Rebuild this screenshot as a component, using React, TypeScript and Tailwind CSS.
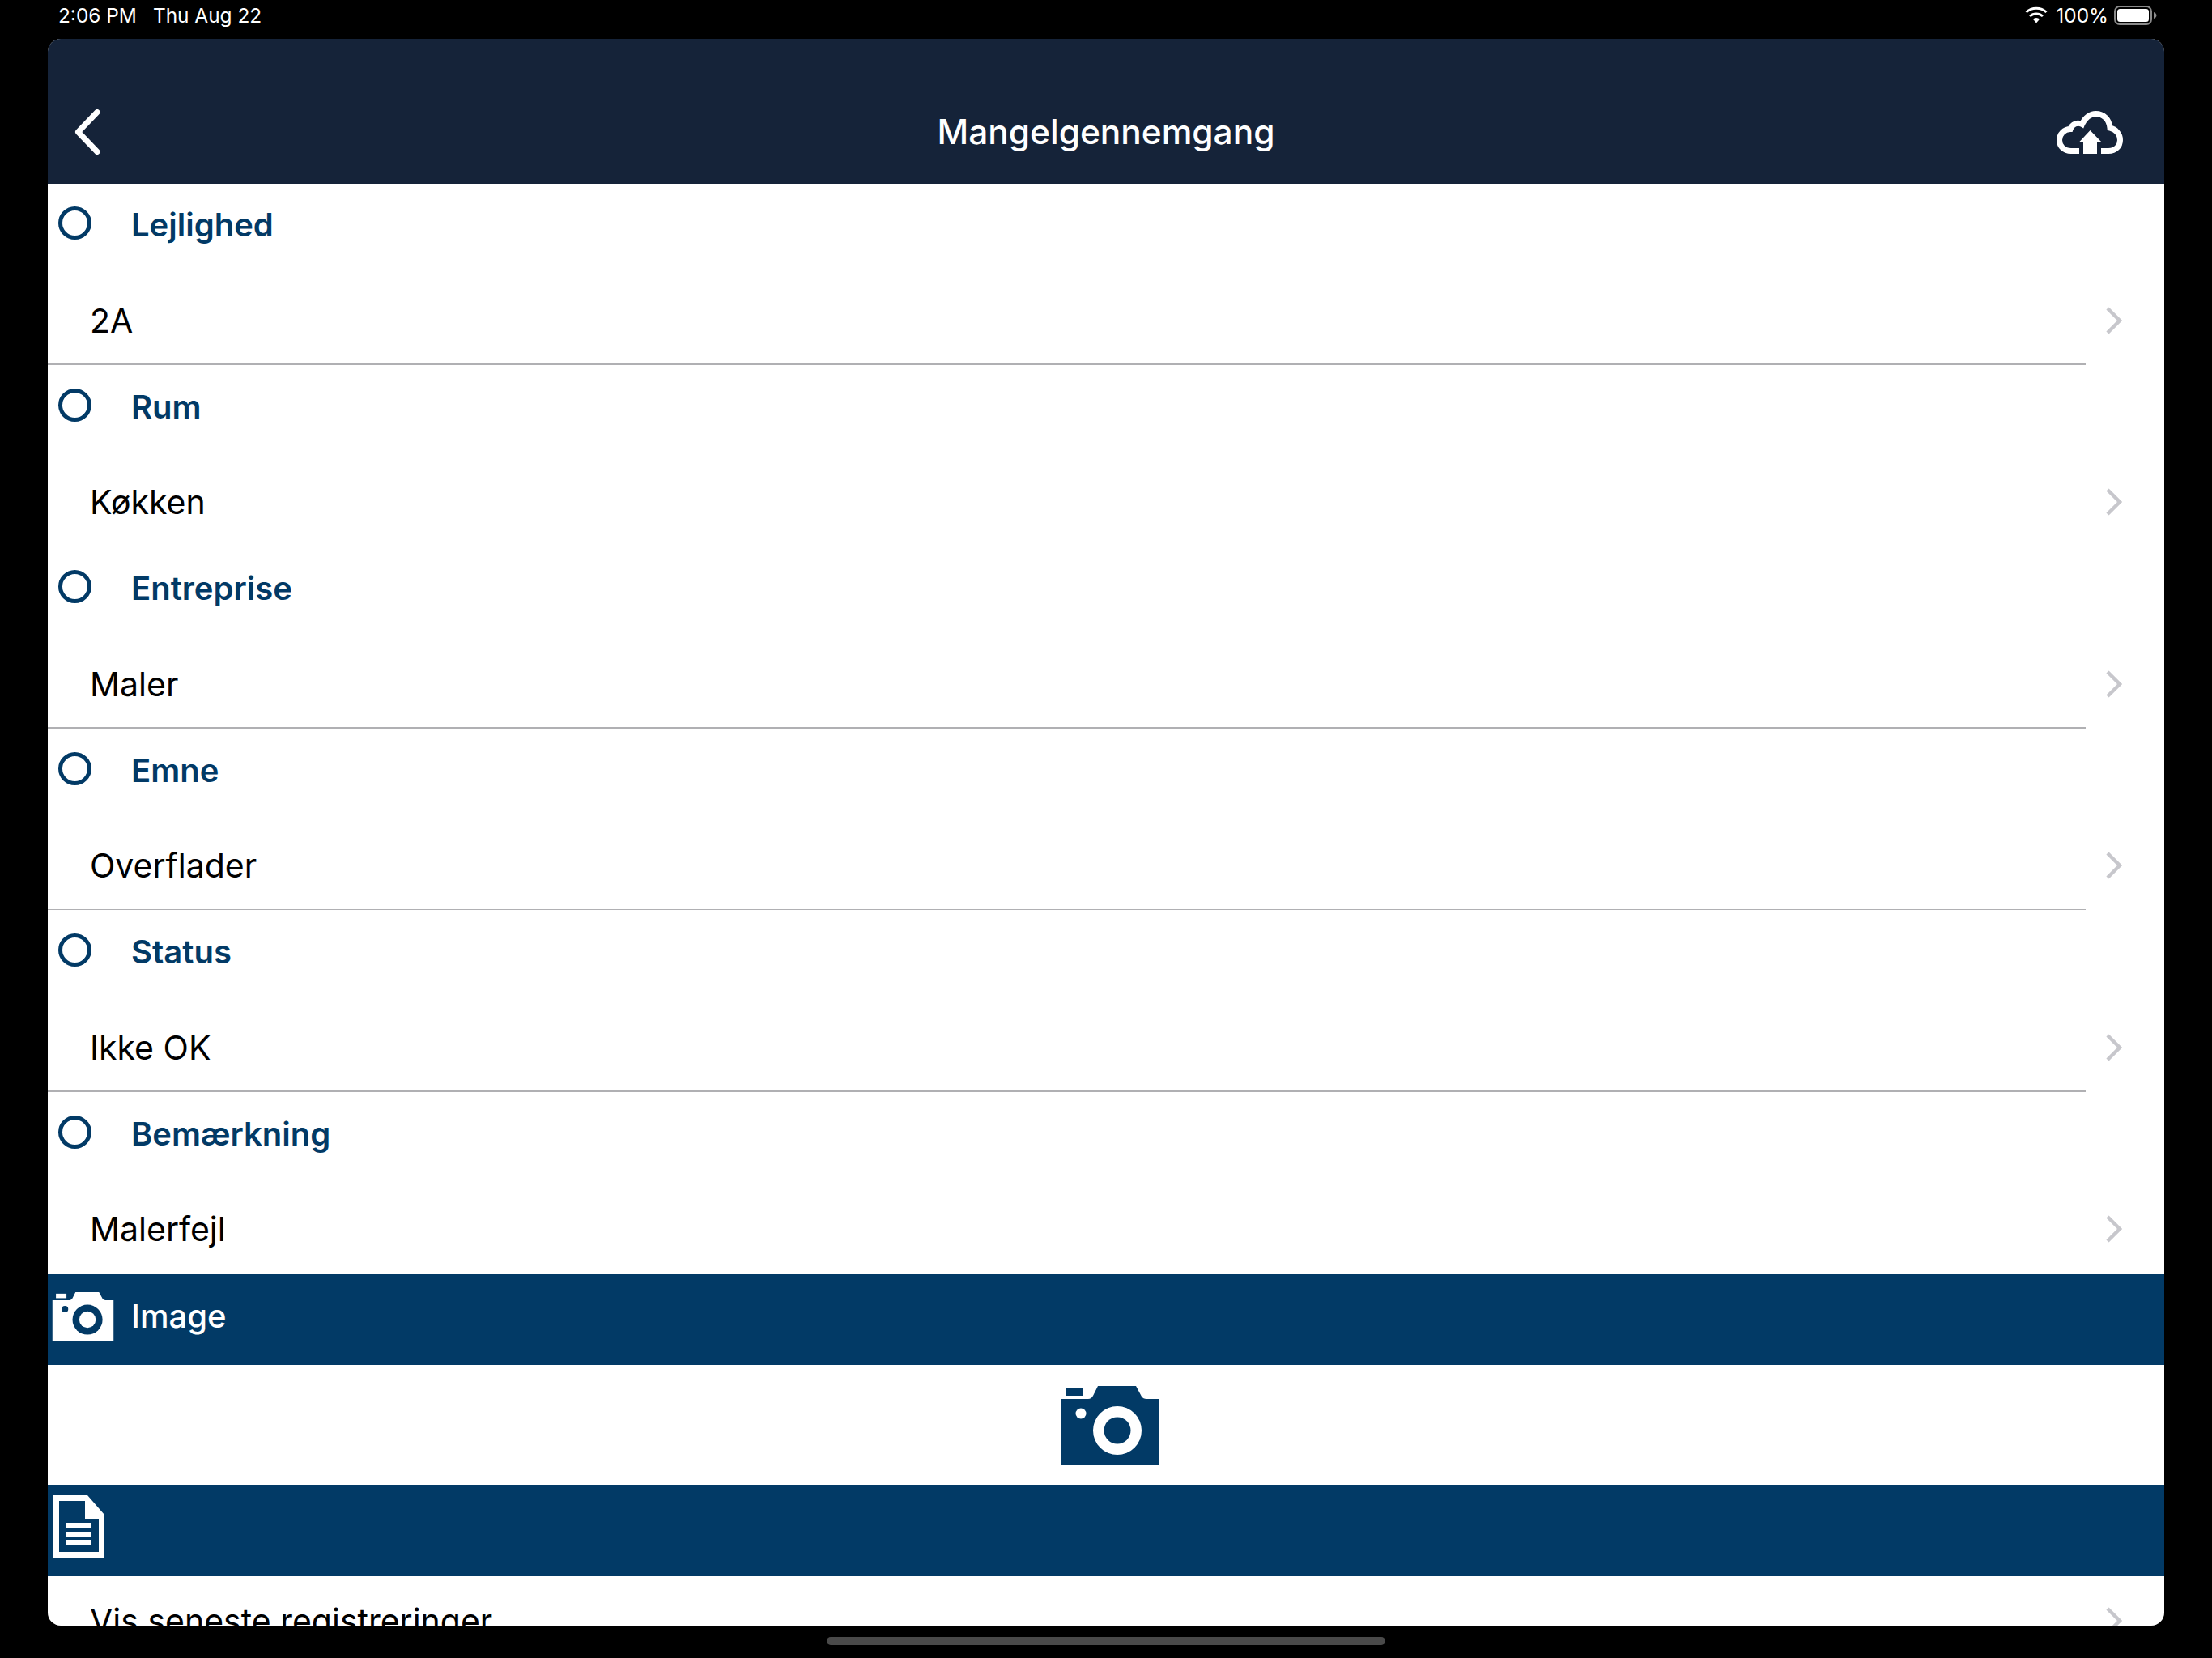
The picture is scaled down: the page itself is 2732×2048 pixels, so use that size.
const NAVY = "#023a66";

const rows = [
  ["Lejlighed", "2A"],
  ["Rum", "Køkken"],
  ["Entreprise", "Maler"],
  ["Emne", "Overflader"],
  ["Status", "Ikke OK"],
  ["Bemærkning", "Malerfejl"],
];

function Chevron() {
  return (
    <svg width="22" height="36" viewBox="0 0 22 36" fill="none" className="shrink-0">
      <path d="M3 3 L18 18 L3 33" stroke="#c7c7cc" strokeWidth="4.5" />
    </svg>
  );
}

function Wifi() {
  return (
    <svg width="28" height="21" viewBox="0 0 28 21" fill="none">
      <path d="M1.5 7 C8.5 0.5 19.5 0.5 26.5 7" stroke="#fff" strokeWidth="3" />
      <path d="M6 12 C10.5 8 17.5 8 22 12" stroke="#fff" strokeWidth="3" />
      <path d="M9.8 15.6 L14 20.5 L18.2 15.6 C15.5 13.6 12.5 13.6 9.8 15.6 Z" fill="#fff" />
    </svg>
  );
}

function Battery() {
  return (
    <svg width="54" height="24" viewBox="0 0 54 24" fill="none" className="-ml-[3px]">
      <rect x="1" y="1" width="45" height="22" rx="6" stroke="#8a8a8a" strokeWidth="2" />
      <rect x="4" y="4" width="39" height="16" rx="3.5" fill="#fff" />
      <path d="M49 8 C51.5 9 52.5 10.5 52.5 12 C52.5 13.5 51.5 15 49 16 Z" fill="#8a8a8a" />
    </svg>
  );
}

function Cloud() {
  return (
    <svg width="82" height="54" viewBox="0 0 82 54" fill="none" className="shrink-0">
      <path
        d="M28 49.5 H18 C9 49.5 3.5 43.5 3.5 36 C3.5 28.5 9.5 22.5 17 22.5 C19 16 26 13.5 31.5 16.5 C35 8 42 3.5 48.5 3.5 C58 3.5 65 10.5 66 21 C73 22.5 78.5 28.5 78.5 36 C78.5 43.5 73 49.5 64 49.5 H55"
        stroke="#fff"
        strokeWidth="7"
      />
      <path d="M41.5 24 L56 39 H50 V53 H33 V39 L27.5 39 Z" fill="#fff" />
    </svg>
  );
}

function Camera({ color, hole, width, height }: { color: string; hole: string; width: number; height: number }) {
  return (
    <svg width={width} height={height} viewBox="0 0 122 97" className="shrink-0">
      <path d="M46 0 H93 L100 13 Q102 16 106 16 H122 V97 H0 V16 H34 Q38 16 40 12 Z" fill={color} />
      <rect x="7" y="3" width="21" height="9" fill={color} />
      <circle cx="25" cy="34" r="6.5" fill={hole} />
      <circle cx="70" cy="55" r="30" fill={hole} />
      <circle cx="70" cy="55" r="16.5" fill={color} />
    </svg>
  );
}

function Doc() {
  return (
    <svg width="63" height="77" viewBox="0 0 63 77" className="shrink-0">
      <path
        fillRule="evenodd"
        d="M0 0 H42 L63 24 V77 H0 Z M7 7 V70 H56 V29 H39 V7 Z"
        fill="#fff"
      />
      <rect x="15" y="34" width="32" height="6" fill="#fff" />
      <rect x="15" y="45" width="32" height="6" fill="#fff" />
      <rect x="15" y="55" width="32" height="6" fill="#fff" />
    </svg>
  );
}

export default function App() {
  return (
    <div className="w-[2732px] h-[2048px] bg-black flex flex-col overflow-hidden font-['Inter','Liberation_Sans',sans-serif]">
      <div className="h-[48px] shrink-0 flex items-center justify-between pl-[72px] pr-[67px] text-white text-[24.4px] pb-[10px]">
        <div className="flex gap-[20px]">
          <span>2:06 PM</span>
          <span>Thu Aug 22</span>
        </div>
        <div className="flex items-center gap-[10px]">
          <Wifi />
          <span>100%</span>
          <Battery />
        </div>
      </div>

      <div className="mx-[59px] h-[1960px] shrink-0 bg-white rounded-[16px] overflow-hidden flex flex-col">
        <div className="h-[179px] shrink-0 bg-[#152339] flex items-end pb-[36px] pl-[33px] pr-[51px]">
          <svg width="32" height="56" viewBox="0 0 32 56" fill="none" className="shrink-0">
            <path d="M28 3.5 L4.5 28 L28 52.5" stroke="#fff" strokeWidth="7" strokeLinecap="round" strokeLinejoin="round" />
          </svg>
          <span className="flex-1 text-center pl-[68px] text-white text-[42.4px] leading-[56px] font-medium">Mangelgennemgang</span>
          <Cloud />
        </div>

        {rows.map(([label, value]) => (
          <div key={label} className="h-[224.5px] shrink-0 flex flex-col relative">
            <div className="h-[92px] flex items-start pl-[13px] pt-[28px]">
              <div className="w-[41px] h-[41px] rounded-full border-[5.5px] border-[#023a66] shrink-0" />
              <span className="ml-[49px] -mt-[1px] text-[40px] leading-[48px] font-semibold text-[#023a66]">{label}</span>
            </div>
            <div className="flex-1 flex items-center justify-between pl-[52px] pr-[51px] pt-[21px]">
              <span className="text-[41px] leading-[60px] text-black">{value}</span>
              <Chevron />
            </div>
            <div className="absolute left-0 bottom-[1px] w-[2517px] h-[1.5px] bg-[#b0b0b3]" />
          </div>
        ))}

        <div className="h-[112px] shrink-0 bg-[#023a66] flex items-start pl-[5px] pt-[22px]">
          <Camera color="#fff" hole="#023a66" width={77} height={60} />
          <span className="ml-[21px] text-[40px] leading-[60px] font-medium text-white">Image</span>
        </div>
        <div className="h-[148px] shrink-0 flex items-center justify-center pl-[10px]">
          <Camera color={NAVY} hole="#fff" width={122} height={97} />
        </div>
        <div className="h-[113px] shrink-0 bg-[#023a66] flex items-start pl-[7px] pt-[13px]">
          <Doc />
        </div>
        <div className="flex-1 flex items-start justify-between pl-[52px] pr-[51px] pt-[31px]">
          <span className="text-[41px] leading-[48px] text-black whitespace-nowrap">Vis seneste registreringer</span>
          <div className="mt-[6px]">
            <Chevron />
          </div>
        </div>
      </div>

      <div className="flex-1 flex items-center justify-center pb-[2px]">
        <div className="w-[690px] h-[10px] rounded-full bg-[#4a4a4a]" />
      </div>
    </div>
  );
}
